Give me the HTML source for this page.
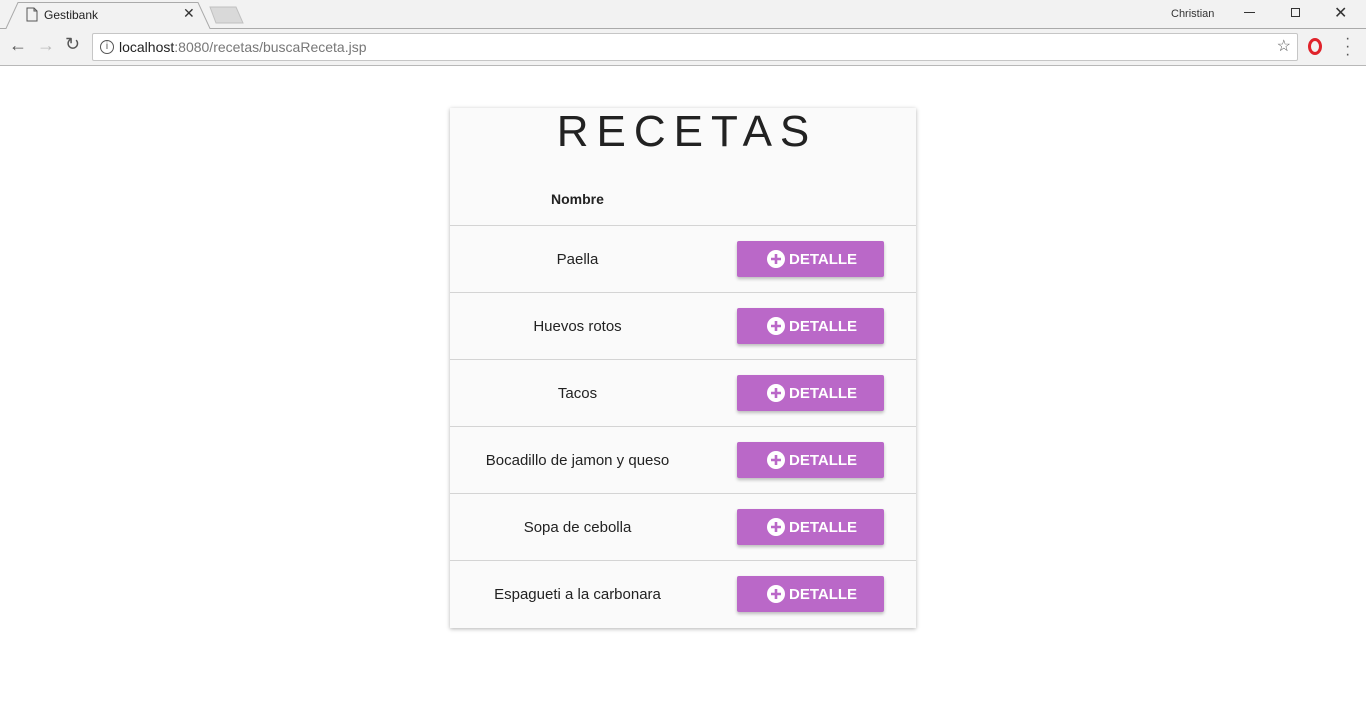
<!DOCTYPE html>
<html><head><meta charset="utf-8"><style>
*{box-sizing:border-box;margin:0;padding:0}
body{width:1366px;height:728px;background:#fff;font-family:"Liberation Sans",sans-serif;position:relative;overflow:hidden}
.tabbar{position:absolute;top:0;left:0;width:1366px;height:29px;background:#fff}
.toolbar{position:absolute;top:29px;left:0;width:1366px;height:37px;background:#f2f2f2;border-bottom:1px solid #b8b8b8}
.url{position:absolute;left:92px;top:4px;width:1206px;height:28px;background:#fff;border:1px solid #c6c6c6;border-radius:2px;font-size:14px;line-height:26px;padding-left:26px;color:#777}
.card{position:absolute;left:450px;top:108px;width:466px;height:520px;background:#fafafa;box-shadow:0 1px 4px rgba(0,0,0,.3)}
h1{position:absolute;top:0;left:0;width:466px;text-align:center;font-weight:normal;font-size:44px;letter-spacing:8px;color:#222;line-height:48px;padding-left:8px}
.hdr{position:absolute;top:83px;left:0;width:466px;font-weight:bold;font-size:14px;color:#222}
.row{position:absolute;left:0;width:466px;height:67px;border-top:1px solid #d4d4d4}
.name{position:absolute;left:0;width:255px;text-align:center;top:25px;font-size:15px;color:#222}
.btn{position:absolute;left:287px;top:15px;width:147px;height:36px;background:#ba68c8;border-radius:2px;box-shadow:0 2px 3px rgba(0,0,0,.25);color:#fff;font-weight:bold;font-size:15px;line-height:38px;padding-left:30px}
.btn svg{position:absolute;left:30px;top:9px}
.btn span{margin-left:22px}
</style></head><body>
<div class="tabbar">
<svg width="1366" height="30" style="position:absolute;left:0;top:0">
<rect x="0" y="0" width="1366" height="29" fill="#f2f2f2"/>
<path d="M0 28.5 H6 L18 2.5 H198 L210 28.5 H1366" fill="#f2f2f2" stroke="#aaa"/>
<path d="M210 7 H236 L243 23 H216 Z" fill="#d9d9d9" stroke="#c0c0c0"/>
<path d="M27 8 h7 l3 3 v10 h-10 z M34 8 v3 h3" fill="none" stroke="#555"/>
</svg>
<div style="position:absolute;left:44px;top:8px;font-size:12px;color:#222">Gestibank</div>
<div style="position:absolute;left:183px;top:5px;font-size:14px;color:#333">✕</div>
<div style="position:absolute;left:1171px;top:8px;font-size:11px;color:#333">Christian</div>
<div style="position:absolute;left:1244px;top:12px;width:11px;height:1px;background:#333"></div>
<div style="position:absolute;left:1291px;top:8px;width:9px;height:9px;border:1px solid #333"></div>
<div style="position:absolute;left:1334px;top:3px;font-size:16px;color:#333">✕</div>
</div>
<div class="toolbar">
<div style="position:absolute;left:9px;top:6px;font-size:18px;color:#555">←</div>
<div style="position:absolute;left:37px;top:6px;font-size:18px;color:#bbb">→</div>
<div style="position:absolute;left:65px;top:5px;font-size:18px;color:#555">↻</div>
<div class="url"><span style="position:absolute;left:7px;top:6px;width:14px;height:14px;border:1.5px solid #555;border-radius:50%;font-size:10px;line-height:11px;text-align:center;color:#555">i</span><span style="color:#222">localhost</span>:8080/recetas/buscaReceta.jsp<span style="position:absolute;right:6px;top:0;color:#555;font-size:16px">☆</span></div>
<div style="position:absolute;left:1308px;top:9px;width:14px;height:17px;border:3px solid #e0232b;border-radius:50%"></div>
<div style="position:absolute;left:1345px;top:6px;font-size:16px;color:#555;line-height:8px">·<br>·<br>·</div>
</div>
<div class="card">
<h1>RECETAS</h1>
<div class="hdr"><span style="position:absolute;left:101px">Nombre</span></div>
<div class="row" style="top:117px"><div class="name">Paella</div><div class="btn"><svg width="18" height="18" viewBox="0 0 18 18"><circle cx="9" cy="9" r="9" fill="#fff"/><path d="M9 4v10M4 9h10" stroke="#ba68c8" stroke-width="2.6"/></svg><span>DETALLE</span></div></div>
<div class="row" style="top:184px"><div class="name">Huevos rotos</div><div class="btn"><svg width="18" height="18" viewBox="0 0 18 18"><circle cx="9" cy="9" r="9" fill="#fff"/><path d="M9 4v10M4 9h10" stroke="#ba68c8" stroke-width="2.6"/></svg><span>DETALLE</span></div></div>
<div class="row" style="top:251px"><div class="name">Tacos</div><div class="btn"><svg width="18" height="18" viewBox="0 0 18 18"><circle cx="9" cy="9" r="9" fill="#fff"/><path d="M9 4v10M4 9h10" stroke="#ba68c8" stroke-width="2.6"/></svg><span>DETALLE</span></div></div>
<div class="row" style="top:318px"><div class="name">Bocadillo de jamon y queso</div><div class="btn"><svg width="18" height="18" viewBox="0 0 18 18"><circle cx="9" cy="9" r="9" fill="#fff"/><path d="M9 4v10M4 9h10" stroke="#ba68c8" stroke-width="2.6"/></svg><span>DETALLE</span></div></div>
<div class="row" style="top:385px"><div class="name">Sopa de cebolla</div><div class="btn"><svg width="18" height="18" viewBox="0 0 18 18"><circle cx="9" cy="9" r="9" fill="#fff"/><path d="M9 4v10M4 9h10" stroke="#ba68c8" stroke-width="2.6"/></svg><span>DETALLE</span></div></div>
<div class="row" style="top:452px"><div class="name">Espagueti a la carbonara</div><div class="btn"><svg width="18" height="18" viewBox="0 0 18 18"><circle cx="9" cy="9" r="9" fill="#fff"/><path d="M9 4v10M4 9h10" stroke="#ba68c8" stroke-width="2.6"/></svg><span>DETALLE</span></div></div>
</div>
</body></html>
